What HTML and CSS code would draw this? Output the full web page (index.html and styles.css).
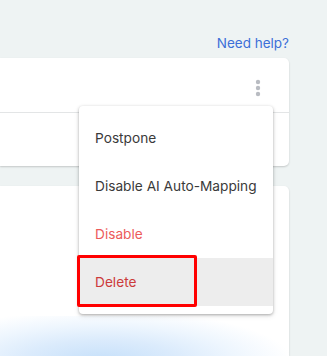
FILE: index.html
```html
<!DOCTYPE html>
<html lang="en">
<head>
    <meta charset="UTF-8">
    <meta name="viewport" content="width=device-width, initial-scale=1.0">
    <title>Mapping rules</title>
    <link rel="stylesheet" href="styles.css">
</head>
<body>
    <div class="page">
        <div class="topbar"><a class="help" href="#">Need help?</a></div>

        <div class="card rule-card">
            <div class="rule-head">
                <button class="kebab" aria-label="More actions">
                    <svg width="8" height="18" viewBox="0 0 8 18"><circle cx="4" cy="3" r="2.2"/><circle cx="4" cy="9" r="2.2"/><circle cx="4" cy="15" r="2.2"/></svg>
                </button>
            </div>
            <div class="rule-body"></div>
        </div>

        <div class="card next-card">
            <div class="glow"></div>
        </div>

        <ul class="menu">
            <li class="menu-item">Postpone</li>
            <li class="menu-item">Disable AI Auto-Mapping</li>
            <li class="menu-item warn">Disable</li>
            <li class="menu-item danger active">Delete</li>
        </ul>
        <div class="highlight-box"></div>
    </div>
</body>
</html>
```

FILE: styles.css
```css
body { margin: 0; background: #eef3f3; font-family: Inter, "Noto Sans", sans-serif; overflow: hidden; }
.page { position: relative; height: 356px; padding-right: 38px; }
.topbar { height: 58px; display: flex; justify-content: flex-end; align-items: flex-start; }
.help { margin-top: 34px; color: #3c6fd8; font-size: 13.5px; text-decoration: none; line-height: 18px; }
.card { background: #fff; border-radius: 0 5px 5px 0; box-shadow: 0 1px 2px rgba(0, 0, 0, 0.18); }
.rule-card { height: 108px; }
.rule-head { height: 54px; border-bottom: 1px solid #e3e5e6; display: flex; justify-content: flex-end; align-items: center; padding-right: 27px; }
.kebab { background: none; border: 0; padding: 0; display: flex; margin-top: 6px; }
.kebab svg { fill: #b9bcc2; }
.next-card { margin-top: 20px; height: 170px; border-radius: 0 5px 0 0; position: relative; overflow: hidden; }
.glow { position: absolute; left: 0; right: 0; top: 130px; height: 40px; background: radial-gradient(ellipse 190px 50px at 35% 110%, #c6e0fa 0%, #dbebfc 40%, #eef6fe 70%, rgba(255, 255, 255, 0) 100%); }
.menu { position: absolute; left: 79px; top: 106px; width: 194px; margin: 0; padding: 8px 0; list-style: none; background: #fff; border-radius: 4px; box-shadow: 0 1px 3px rgba(0, 0, 0, 0.3), 0 2px 6px rgba(0, 0, 0, 0.08); }
.menu-item { height: 48px; line-height: 48px; padding-left: 16px; font-size: 13.7px; color: #3a3a3a; white-space: nowrap; }
.menu-item.warn { color: #ec5b5b; }
.menu-item.danger { color: #cc3b3b; }
.menu-item.active { background: #ededed; }
.highlight-box { position: absolute; left: 77px; top: 255px; width: 114px; height: 46px; border: 3px solid #ff0000; border-radius: 2px; }
```
